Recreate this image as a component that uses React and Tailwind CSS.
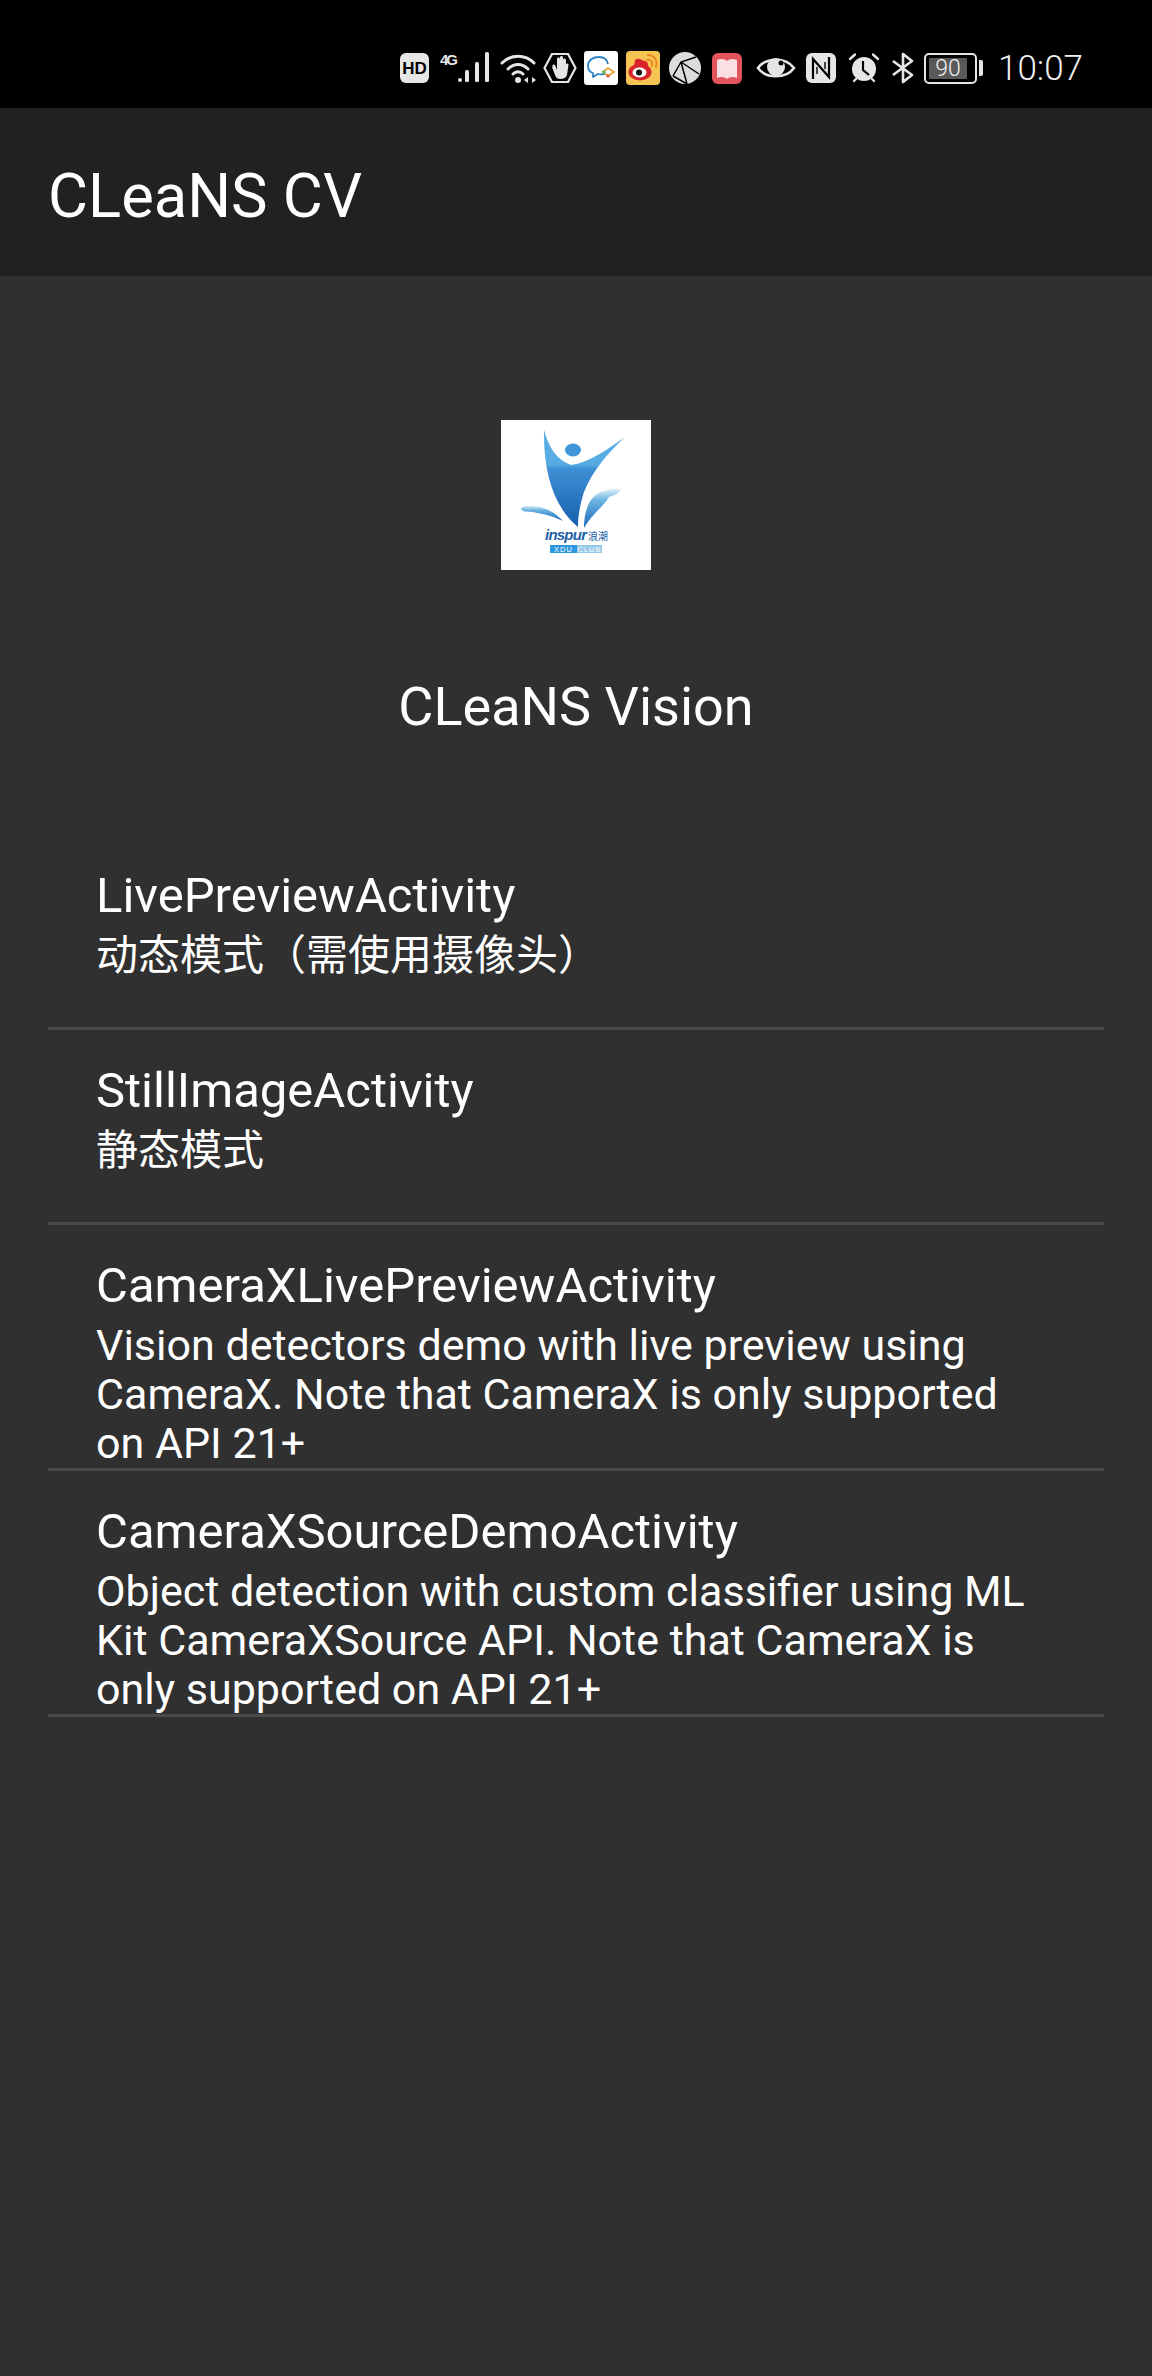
import React from "react";

const FONT = "font-['Roboto','Noto_Sans_CJK_SC',sans-serif]";

const activities = [
  { title: "LivePreviewActivity", desc: "动态模式（需使用摄像头）", descClass: "text-[42px]" },
  { title: "StillImageActivity", desc: "静态模式", descClass: "text-[42px]" },
  {
    title: "CameraXLivePreviewActivity",
    desc: "Vision detectors demo with live preview using CameraX. Note that CameraX is only supported on API 21+",
    descClass: "text-[43px]",
  },
  {
    title: "CameraXSourceDemoActivity",
    desc: "Object detection with custom classifier using ML Kit CameraXSource API. Note that CameraX is only supported on API 21+",
    descClass: "text-[43px]",
  },
];

function StatusIcons() {
  return (
    <>
      {/* HD */}
      <svg width="29" height="30" viewBox="0 0 29 30" className="shrink-0">
        <rect width="29" height="30" rx="6" fill="#e6e6e6" />
        <text x="14.5" y="21" textAnchor="middle" fontSize="17" fontWeight="700" fill="#000" fontFamily="Liberation Sans">HD</text>
      </svg>
      {/* 4G signal */}
      <svg width="50" height="32" viewBox="0 0 50 32" className="ml-[11px] shrink-0">
        <text x="0" y="13" fontSize="15" fontWeight="700" fill="#e6e6e6" fontFamily="Liberation Sans" textLength="18">4G</text>
        <circle cx="20" cy="28" r="2" fill="#e6e6e6" />
        <rect x="25" y="18" width="4" height="12" rx="1.5" fill="#e6e6e6" />
        <rect x="35" y="10" width="4" height="20" rx="1.5" fill="#e6e6e6" />
        <rect x="45" y="0" width="4" height="30" rx="1.5" fill="#e6e6e6" />
      </svg>
      {/* wifi */}
      <svg width="37" height="32" viewBox="0 0 37 32" fill="none" className="ml-[10px] shrink-0">
        <path d="M2 11C11 2 25 2 34 11M8 17C14 11 22 11 28 17M13 22C16 19 20 19 23 22" stroke="#e6e6e6" strokeWidth="3" strokeLinecap="round" />
        <circle cx="18" cy="28" r="3" fill="#e6e6e6" />
        <path d="M28 25v6l-4-3zM32 25v6l4-3z" fill="#e6e6e6" />
      </svg>
      {/* hand in hexagon */}
      <svg width="34" height="32" viewBox="0 0 34 32" fill="none" className="ml-[6px] shrink-0">
        <path d="M9 2H25L32.5 16L25 30H9L1.5 16Z" stroke="#e6e6e6" strokeWidth="2.2" />
        <path d="M9 15l3 8c1 3 3 4 5.500 4s5.500-1 6.500-4l1.500-10c0-2-2.500-2-2.500 0v3V8c0-2-3-2-3 0v7V5.500c0-2-3-2-3 0V15V7c0-2-3-2-3 0v11l-2-5c-1-1-3-1-2.500 2z" fill="#e6e6e6" />
      </svg>
      {/* chat app */}
      <svg width="34" height="34" viewBox="0 0 34 34" fill="none" className="ml-[7px] shrink-0">
        <rect width="34" height="34" rx="3" fill="#fff" />
        <path d="M24 13C23 8 19 6 15 6C9 6 4 9 4 15C4 19 6 21 9 22L9 26L14 23C17 24 19 23 21 23" stroke="#2b7fc4" strokeWidth="1.800" strokeLinejoin="round" />
        <path d="M19 21L24 17L30 21L24 25Z" stroke="#e8a33d" strokeWidth="1.800" />
        <circle cx="20" cy="21" r="1.800" fill="#63b96a" />
        <circle cx="24" cy="25" r="1.800" fill="#e0654e" />
      </svg>
      {/* weibo */}
      <svg width="34" height="34" viewBox="0 0 34 34" fill="none" className="ml-[8px] shrink-0">
        <rect width="34" height="34" rx="4" fill="#f6c453" />
        <ellipse cx="14" cy="21" rx="11.500" ry="8.500" fill="#d8232c" />
        <path d="M9 9C13 6 15 9 19 10C22 11 23 14 21 16H8Z" fill="#d8232c" />
        <ellipse cx="13.500" cy="21.500" rx="7" ry="5" fill="#fff" />
        <circle cx="13" cy="21.500" r="3" fill="#111" />
        <path d="M21 9C25 8 27 11 26 15M22 4C28 4 32 9 30 16" stroke="#e88a1f" strokeWidth="2" strokeLinecap="round" />
      </svg>
      {/* globe */}
      <svg width="32" height="32" viewBox="0 0 32 32" fill="none" className="ml-[9px] shrink-0">
        <circle cx="16" cy="16" r="16" fill="#dcdcdc" />
        <path d="M4 24L12 10L27 5M12 10L30 22M4 24L18 32M12 10L18 32" stroke="#000" strokeWidth="1.500" />
      </svg>
      {/* book */}
      <svg width="30" height="31" viewBox="0 0 30 31" className="ml-[11px] shrink-0">
        <rect width="30" height="31" rx="6" fill="#e2555c" />
        <path d="M5 7C9 5 13 6 15 8C17 6 21 5 25 7V25C21 23 17 24 15 26C13 24 9 23 5 25Z" fill="#fbdfe2" />
      </svg>
      {/* eye */}
      <svg width="40" height="28" viewBox="0 0 40 28" fill="none" className="ml-[14px] shrink-0">
        <path d="M2 14C10 3 30 3 38 14C30 25 10 25 2 14Z" stroke="#e6e6e6" strokeWidth="2.600" />
        <circle cx="20" cy="13" r="9" fill="#e6e6e6" />
        <circle cx="25" cy="9" r="2.500" fill="#000" />
      </svg>
      {/* NFC */}
      <svg width="30" height="30" viewBox="0 0 30 30" fill="none" className="ml-[10px] shrink-0">
        <rect width="30" height="30" rx="6" fill="#e6e6e6" />
        <path d="M7 26V6L23 24V4" stroke="#000" strokeWidth="2.200" />
        <path d="M11 21V14M19 16V9" stroke="#000" strokeWidth="1.400" />
      </svg>
      {/* alarm */}
      <svg width="32" height="32" viewBox="0 0 32 32" fill="none" className="ml-[12px] shrink-0">
        <circle cx="16" cy="17" r="12" fill="#e6e6e6" />
        <path d="M15 9V18L21 23" stroke="#000" strokeWidth="2.200" />
        <path d="M2 7L7 2.500M30 7L25 2.500M6 29L8 27M26 29L24 27" stroke="#e6e6e6" strokeWidth="2.400" strokeLinecap="round" />
      </svg>
      {/* bluetooth */}
      <svg width="24" height="32" viewBox="0 0 24 32" fill="none" className="ml-[11px] shrink-0">
        <path d="M2 9L21 23L12 30V2L21 9L2 23" stroke="#e6e6e6" strokeWidth="2.600" strokeLinejoin="round" />
      </svg>
      {/* battery */}
      <div className="ml-[9px] flex shrink-0 items-center">
        <div className="flex h-[31px] w-[53px] items-center rounded-[5px] border-[2.500px] border-[#e6e6e6] p-[3px]">
          <div className="flex h-full w-[38px] items-center justify-center rounded-[1px] bg-[#595959] text-[23px] leading-none font-light text-[#f0f0f0]">
            90
          </div>
        </div>
        <div className="ml-[2px] h-[16px] w-[4px] rounded-r-[2px] bg-[#e6e6e6]" />
      </div>
      <span className="ml-[15px] text-[35px] leading-none font-light text-[#f0f0f0]">10:07</span>
    </>
  );
}

function Logo() {
  return (
    <svg width="150" height="150" viewBox="0 0 150 150" className="block">
      <defs>
        <linearGradient id="body" x1="0" y1="0" x2="0" y2="1">
          <stop offset="0" stopColor="#5bb0e6" />
          <stop offset="0.36" stopColor="#56aae2" />
          <stop offset="0.4" stopColor="#3f8fd4" />
          <stop offset="1" stopColor="#155fae" />
        </linearGradient>
        <linearGradient id="splash" x1="0" y1="0" x2="0" y2="1">
          <stop offset="0" stopColor="#e4f1f8" />
          <stop offset="0.3" stopColor="#6ab3e2" />
          <stop offset="1" stopColor="#1a69b6" />
        </linearGradient>
      </defs>
      <rect width="150" height="150" fill="#fff" />
      <path d="M43 10C48 28 56 40 70 45C90 42 108 28 124 17C106 34 92 50 83 72C79 85 77 95 77 107C56 90 42 58 43 10Z" fill="url(#body)" />
      <ellipse cx="72" cy="30" rx="8" ry="6.500" fill="#3f97d8" />
      <path d="M21 87C33 83 50 88 62 101C50 95 35 92 24 91.500C20 91 19 88 21 87Z" fill="url(#splash)" />
      <path d="M83 108C83 88 90 74 103 71C110 68 116 68 120 70C116 75 111 76 108 77C104 85 90 95 83 108Z" fill="url(#splash)" />
      <text x="44" y="120" fontSize="15" fontWeight="700" fontStyle="italic" fill="#1d5fa8" fontFamily="Liberation Sans" textLength="42">inspur</text>
      <text x="87" y="120" fontSize="10" fill="#1d5fa8" fontFamily="Noto Sans CJK SC">浪潮</text>
      <rect x="49" y="125" width="27" height="8" fill="#2c97dc" />
      <rect x="76" y="125" width="25" height="8" fill="#93c8ea" />
      <text x="62.500" y="132" textAnchor="middle" fontSize="7.500" letterSpacing="1" fill="#fff" fontFamily="Liberation Sans">XDU</text>
      <text x="88.500" y="132" textAnchor="middle" fontSize="7.500" letterSpacing="1" fill="#fff" fontFamily="Liberation Sans">CLUB</text>
    </svg>
  );
}

export default function App() {
  return (
    <div className={`${FONT} flex h-[2376px] w-[1152px] flex-col overflow-hidden bg-[#303030] text-white`}>
      <div className="flex h-[108px] shrink-0 items-center justify-end bg-black pr-[69px] pt-[28px]">
        <StatusIcons />
      </div>
      <div className="flex h-[168px] shrink-0 items-center bg-[#212121] px-[48px] pt-[9px]">
        <h1 className="text-[61.5px] leading-none font-normal">CLeaNS CV</h1>
      </div>
      <div className="flex flex-col items-center pt-[144px]">
        <Logo />
        <p className="mt-[101px] text-[54px] leading-[72px]">CLeaNS Vision</p>
      </div>
      <div className="mt-[92px] px-[48px]">
        {activities.map((item) => (
          <div key={item.title} className="min-h-[195px] border-b-[3px] border-[#4a4a4a] pt-[26px] pr-[64px] pl-[48px]">
            <p className="text-[49px] leading-[70px]">{item.title}</p>
            <p className={`${item.descClass} leading-[49px]`}>{item.desc}</p>
          </div>
        ))}
      </div>
    </div>
  );
}
